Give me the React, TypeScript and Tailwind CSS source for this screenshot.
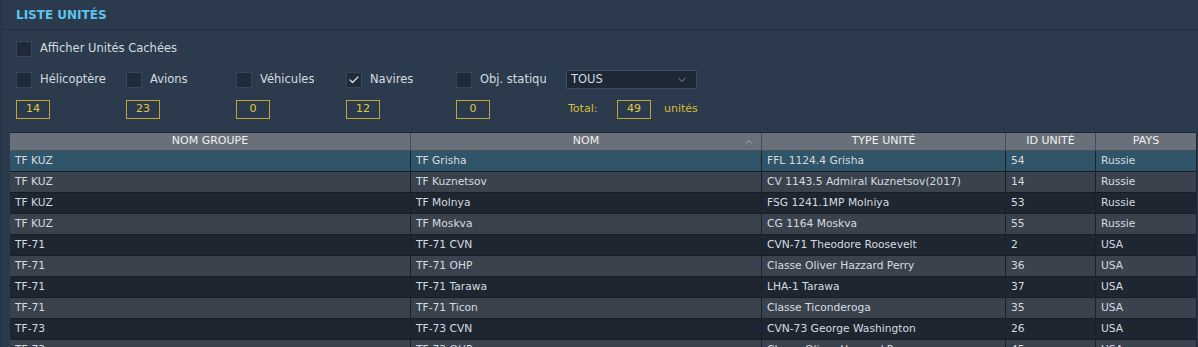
import { Check, ChevronDown, ChevronUp } from 'lucide-react';

const font = { fontFamily: '"DejaVu Sans", "Liberation Sans", sans-serif' };

const filters = [
  { label: 'Hélicoptère', checked: false, count: 14 },
  { label: 'Avions', checked: false, count: 23 },
  { label: 'Véhicules', checked: false, count: 0 },
  { label: 'Navires', checked: true, count: 12 },
  { label: 'Obj. statiqu', checked: false, count: 0 },
];

const columns = [
  { title: 'NOM GROUPE', w: 'w-[400px]' },
  { title: 'NOM', w: 'w-[351px]', sort: true },
  { title: 'TYPE UNITÉ', w: 'w-[244px]' },
  { title: 'ID UNITÉ', w: 'w-[90px]' },
  { title: 'PAYS', w: 'w-[101px]' },
];

const rows = [
  ['TF KUZ', 'TF Grisha', 'FFL 1124.4 Grisha', '54', 'Russie'],
  ['TF KUZ', 'TF Kuznetsov', 'CV 1143.5 Admiral Kuznetsov(2017)', '14', 'Russie'],
  ['TF KUZ', 'TF Molnya', 'FSG 1241.1MP Molniya', '53', 'Russie'],
  ['TF KUZ', 'TF Moskva', 'CG 1164 Moskva', '55', 'Russie'],
  ['TF-71', 'TF-71 CVN', 'CVN-71 Theodore Roosevelt', '2', 'USA'],
  ['TF-71', 'TF-71 OHP', 'Classe Oliver Hazzard Perry', '36', 'USA'],
  ['TF-71', 'TF-71 Tarawa', 'LHA-1 Tarawa', '37', 'USA'],
  ['TF-71', 'TF-71 Ticon', 'Classe Ticonderoga', '35', 'USA'],
  ['TF-73', 'TF-73 CVN', 'CVN-73 George Washington', '26', 'USA'],
  ['TF-73', 'TF-73 OHP', 'Classe Oliver Hazzard Perry', '45', 'USA'],
];

const Box = ({ checked }: { checked?: boolean }) => (
  <div className="w-4 h-4 shrink-0 bg-[#1f2b3a] border border-[#35455a] flex items-center justify-center">
    {checked && <Check className="w-3 h-3 text-[#d8dde2]" strokeWidth={2.5} />}
  </div>
);

const Count = ({ n }: { n: number }) => (
  <div className="w-[34px] h-[19px] border border-[#c2a632] text-[#e2c83e] text-[11px] flex items-center justify-center">
    {n}
  </div>
);

export default function App() {
  return (
    <div style={font} className="w-[1198px] h-[347px] overflow-hidden bg-[#2b3b4d] border-l-[3px] border-[#25354a] text-[#d6dbe0]">
      {/* TITLE */}
      <div className="h-[30px] border-b border-[#1f2c3b] flex items-center pl-[13px]">
        <span className="text-[12px] font-bold text-[#5cc4ec]">LISTE UNITÉS</span>
      </div>

      {/* FILTERS */}
      <div className="pl-[13px] pt-[11px]">
        <div className="flex items-center gap-2 h-4">
          <Box />
          <span className="text-[11.5px]">Afficher Unités Cachées</span>
        </div>

        <div className="flex items-center h-[19px] mt-[13px]">
          {filters.map((f) => (
            <div key={f.label} className="w-[110px] flex items-center gap-2 overflow-hidden">
              <Box checked={f.checked} />
              <span className="text-[11.5px] whitespace-nowrap overflow-hidden max-w-[66px]">{f.label}</span>
            </div>
          ))}
          <div className="w-[131px] h-[19px] bg-[#1c2836] border border-[#3c4c5e] flex items-center justify-between pl-1 pr-2">
            <span className="text-[11.5px]">TOUS</span>
            <ChevronDown className="w-3 h-3 text-[#7e8a96]" />
          </div>
        </div>

        <div className="flex items-center h-[19px] mt-[11px]">
          {filters.map((f) => (
            <div key={f.label} className="w-[110px]">
              <Count n={f.count} />
            </div>
          ))}
          <span className="text-[11px] text-[#d8bd3a] ml-[2px] w-[49px]">Total:</span>
          <Count n={49} />
          <span className="text-[11px] text-[#d8bd3a] ml-[13px]">unités</span>
        </div>
      </div>

      {/* TABLE */}
      <div className="ml-[7px] mt-[13px] w-[1187px] border-t border-r border-[#1c2530]">
        <div className="flex h-[18px] bg-[#6a7079] border-b border-[#4a5058]">
          {columns.map((c, i) => (
            <div
              key={c.title}
              className={`${c.w} shrink-0 relative flex items-center justify-center text-[11px] text-[#eef0f2] ${i > 0 ? 'border-l border-[#464c55]' : ''}`}
            >
              {c.title}
              {c.sort && <ChevronUp className="absolute right-[6px] w-3 h-3 text-[#a8adb3]" />}
            </div>
          ))}
        </div>
        {rows.map((r, ri) => (
          <div
            key={ri}
            className={`flex h-[21px] border-b border-[#161d26] ${
              ri === 0 ? 'bg-[#305468]' : ri % 2 === 1 ? 'bg-[#3a424d]' : 'bg-[#1e2631]'
            }`}
          >
            {r.map((cell, ci) => (
              <div
                key={ci}
                className={`${columns[ci].w} shrink-0 flex items-center pl-[5px] text-[10.7px] whitespace-nowrap overflow-hidden ${
                  ci > 0 ? 'border-l border-[#1a212b]' : ''
                }`}
              >
                {cell}
              </div>
            ))}
          </div>
        ))}
      </div>
    </div>
  );
}
